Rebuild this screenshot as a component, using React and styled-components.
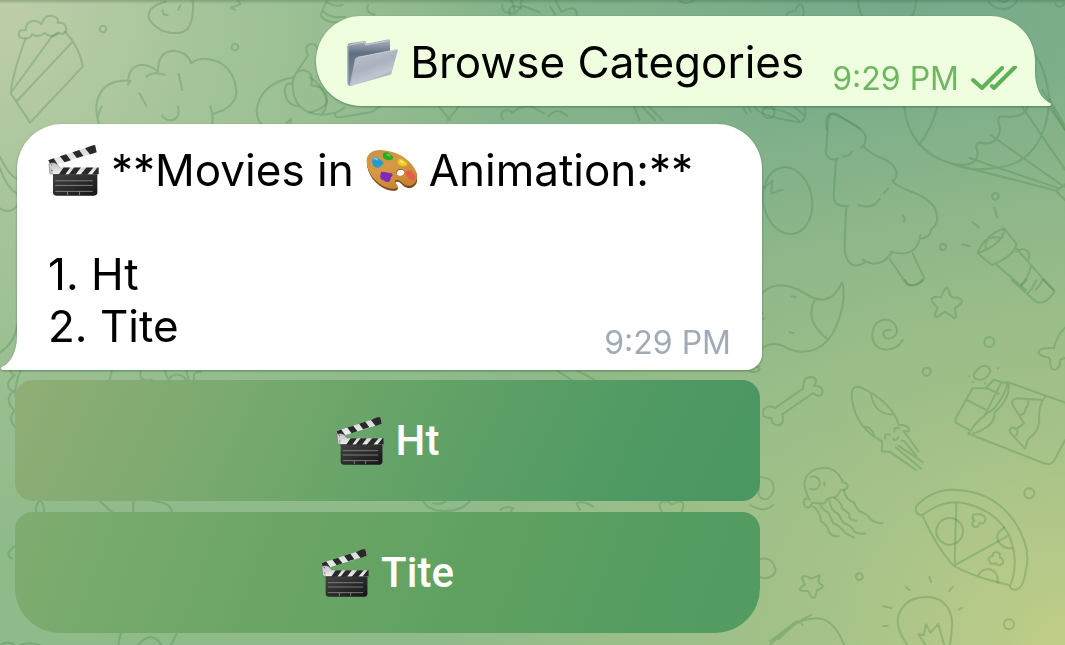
import React from 'react';
import styled, { createGlobalStyle, css } from 'styled-components';

const GlobalStyle = createGlobalStyle`
  *, *::before, *::after { box-sizing: border-box; }
  html, body { margin: 0; }
  body { background: #8fba8a; font-family: Inter, "Liberation Sans", sans-serif; }
`;

const Chat = styled.main`
  position: relative;
  min-height: 100vh;
  overflow: hidden;
  display: flex;
  flex-direction: column;
  gap: 18px;
  padding: 16px 30px 12px 17px;
  background:
    linear-gradient(rgba(40, 90, 60, 0.3), rgba(40, 90, 60, 0) 4px),
    radial-gradient(ellipse 48% 85% at 0% 0%, #bfcea8 0%, rgba(175, 201, 160, 0.6) 45%, rgba(150, 190, 145, 0) 100%),
    radial-gradient(ellipse 60% 90% at 100% 100%, #c0cd88 0%, rgba(174, 197, 136, 0.7) 38%, rgba(150, 188, 138, 0) 100%),
    radial-gradient(ellipse 66% 78% at 84% 0%, #73a98a 0%, rgba(125, 173, 138, 0.82) 35%, rgba(143, 186, 138, 0) 100%),
    #8fba8a;
`;

const Wallpaper = styled.svg`
  position: absolute;
  inset: 0;
  width: 100%;
  height: 100%;
  fill: none;
  stroke: #3c8246;
  stroke-opacity: 0.28;
  stroke-width: 6;
  stroke-linecap: round;
  stroke-linejoin: round;
`;

const Bubble = styled.article`
  position: relative;
  padding: 20px 31px 18px;
  font-size: 44px;
  font-weight: 400;
  line-height: 52px;
  color: #000;
  filter: drop-shadow(0 1px 1px rgba(30, 80, 45, 0.5));
  ${({ $out }) =>
    $out
      ? css`
          align-self: flex-end;
          display: flex;
          align-items: flex-end;
          gap: 28px;
          padding-right: 18px;
          border-radius: 45px 45px 0 45px;
          background: #eefedf;
        `
      : css`
          border-radius: 45px 45px 16px 0;
          background: #fff;
        `}
`;

const Tail = styled.svg`
  position: absolute;
  bottom: 0;
  width: 17px;
  height: 34px;
  ${({ $out }) =>
    $out
      ? css`
          left: 100%;
          fill: #eefedf;
        `
      : css`
          right: 100%;
          fill: #fff;
          transform: scaleX(-1);
        `}
`;

const Line = styled.p`
  margin: 0;
  min-height: 52px;
  display: flex;
  align-items: center;
  gap: 12px;
  white-space: pre;
`;

const Emoji = styled.svg`
  flex: none;
  width: ${({ $size }) => $size}px;
  height: ${({ $size }) => $size}px;
`;

const Meta = styled.div`
  display: flex;
  align-items: center;
  gap: 12px;
  height: 40px;
  margin-bottom: -11px;
  font-size: 32px;
  line-height: 40px;
  color: ${({ $out }) => ($out ? '#6fb562' : '#a0abb6')};
`;

const LastRow = styled.div`
  display: flex;
  justify-content: space-between;
  align-items: flex-end;
`;

const Checks = styled.svg`
  width: 46px;
  height: 26px;
  fill: none;
  stroke: #5cb255;
  stroke-width: 4;
  stroke-linecap: round;
  stroke-linejoin: round;
`;

const Incoming = styled.section`
  width: 100%;
  max-width: 745px;
  position: relative;
`;

const Keyboard = styled.div`
  display: grid;
  gap: 11px;
  margin: 10px 2px 0 -2px;
`;

const KeyButton = styled.button`
  display: flex;
  align-items: center;
  justify-content: center;
  gap: 12px;
  height: 121px;
  border: 0;
  padding: 0;
  border-radius: ${({ $last }) => ($last ? '18px 18px 45px 45px' : '18px')};
  background: ${({ $last }) =>
    $last
      ? 'linear-gradient(110deg, #80ac70 0%, #6fa768 28%, #62a262 55%, #559c61 85%, #529b62 100%)'
      : 'linear-gradient(115deg, #90ae76 0%, #7caa70 26%, #62a267 54%, #4d9863 86%, #4b9762 100%)'};
  color: #fff;
  font: 500 42px/50px Roboto, "Liberation Sans", sans-serif;
  cursor: pointer;
`;

function Clapper({ size }) {
  return (
    <Emoji $size={size} viewBox="0 0 154 154" role="img" aria-label="Clapper board">
      <defs>
        <linearGradient id="slate" x1="0" y1="0" x2="1" y2="1">
          <stop offset="0" stopColor="#444" />
          <stop offset="0.5" stopColor="#2b2b2c" />
          <stop offset="1" stopColor="#151516" />
        </linearGradient>
        <linearGradient id="stripe" x1="0" y1="0" x2="0" y2="1">
          <stop offset="0" stopColor="#d4d4d4" />
          <stop offset="1" stopColor="#f0f0f0" />
        </linearGradient>
      </defs>
      <path d="M0 46 142 0l5 22L10 64Z" fill="url(#stripe)" />
      <path d="M1 46l16-6 12 18-19 6Zm35-12 19-6 14 18-19 6Zm38-12 20-7 13 18-20 6Zm38-12 19-8 11-2 5 22-20 7Z" fill="#29292a" />
      <path d="M3 57q18-9 30 8l8 15-8 7H6Z" fill="#cfd0d1" stroke="#77797b" strokeWidth="2" />
      <path d="M15 68h137v20H15Z" fill="url(#stripe)" />
      <path d="M15 88h18l14-20h20L50 92H15Zm48 0 16-20h20L83 90H61Zm36 0 17-20h21l-18 22H97Zm34 0 16-20h4v20Z" fill="#29292a" />
      <path d="M15 88h134v55q0 10-10 10H25q-10 0-10-10Z" fill="url(#slate)" />
      <path d="M22 108h113M22 122h113M22 140h113M59 140v11M95 140v11" stroke="#909294" strokeWidth="2.5" />
      <circle cx="11" cy="60" r="2" fill="#555" />
      <circle cx="12" cy="77" r="2" fill="#555" />
    </Emoji>
  );
}

function Folder() {
  return (
    <Emoji $size={51} viewBox="112 114 153 153" role="img" aria-label="Open folder">
      <defs>
        <linearGradient id="folderBack" x1="0" y1="0" x2="0" y2="1">
          <stop offset="0" stopColor="#b1b9c4" />
          <stop offset="0.3" stopColor="#5f6f80" />
          <stop offset="1" stopColor="#8391a1" />
        </linearGradient>
        <linearGradient id="folderFront" x1="0" y1="0" x2="0.5" y2="1">
          <stop offset="0" stopColor="#bec5cf" />
          <stop offset="0.55" stopColor="#abb2bf" />
          <stop offset="0.8" stopColor="#c1c6d0" />
          <stop offset="1" stopColor="#8e98a7" />
        </linearGradient>
      </defs>
      <path d="M114 139q0-5 5-6l46-7q4 0 5 8l67-13q4 0 4 4v34L128 259q-13 6-13-6Z" fill="url(#folderBack)" />
      <path d="M116 139l48-10 4 9 68-13" fill="none" stroke="#c7ccd5" strokeWidth="3" />
      <path d="M115 140v114l6 5" fill="none" stroke="#9ca6b3" strokeWidth="4" />
      <path d="M146 174l115-23q5 0 3 5l-18 65q-1 4-5 6l-115 33q-7 1-5-5l15-75q2-5 10-6Z" fill="url(#folderFront)" />
      <path d="M144 175l117-23" fill="none" stroke="#d6dae1" strokeWidth="2" />
    </Emoji>
  );
}

function Palette() {
  return (
    <Emoji $size={51} viewBox="1088 77 154 154" role="img" aria-label="Artist palette">
      <defs>
        <linearGradient id="wood" x1="0" y1="0" x2="0.6" y2="1">
          <stop offset="0" stopColor="#c9924a" />
          <stop offset="0.5" stopColor="#d69a45" />
          <stop offset="1" stopColor="#c88332" />
        </linearGradient>
      </defs>
      <path
        d="M1090 125c2-25 29-34 60-30 42 5 79 34 90 66 8 28-8 46-26 43-17-3-22-22-35-19-10 4 7 13 4 22-4 9-21 5-34 1-35-12-61-50-59-83Zm93 27c-8 9-2 18 10 17 13-2 14-14 5-19-5-2-11-2-15 2Z"
        fill="#79471c"
        fillRule="evenodd"
        transform="translate(1 3)"
      />
      <path
        d="M1090 122c2-25 29-34 60-28 42 5 79 34 90 65 8 26-8 44-26 41-17-3-22-20-35-17-10 4 7 13 4 21-4 9-21 5-34 1-35-12-61-50-59-83Zm93 31c-8 9-2 18 10 17 13-2 14-14 5-19-5-2-11-2-15 2Z"
        fill="url(#wood)"
        fillRule="evenodd"
      />
      <path d="M1140 102q10-6 17 0l12 9q3 6-2 10l-13 2-10-4q-9-7-4-17Z" fill="#28ac27" />
      <path d="M1109 116q9-6 15 0l12 9q9 4 3 10l-7 7q-12 9-22-3-7-11-1-23Z" fill="#229dcd" />
      <path d="M1111 119q9-5 12 4" fill="none" stroke="#70d0f1" strokeWidth="5" />
      <path d="M1186 121q9-4 14 2l10 6q5 7-3 11-12 4-21-5-5-8 0-14Z" fill="#edcf20" />
      <path d="M1211 155q10-4 15 4l10 12q4 11-7 12-11-1-16-10-10-10-2-18Z" fill="#eb594c" />
      <path d="M1134 158l15 1q9 3 17 3 5 7-2 12l-4 12q-10 6-18-2-12-2-11-14Z" fill="#812ab5" />
      <path d="M1150 107q8-2 11 5" fill="none" stroke="#78d254" strokeWidth="4" />
      <path d="M1191 125l11 5" fill="none" stroke="#fff486" strokeWidth="4" />
    </Emoji>
  );
}

function Doodles() {
  return (
    <Wallpaper viewBox="0 0 1065 645" preserveAspectRatio="xMinYMin slice" aria-hidden="true">
      {/* cake, strawberry, cloud face and bird */}
      <g transform="scale(0.3333)">
        <path d="M77 115C58 165 38 225 32 279L90 368 249 199Q238 140 196 96M32 279 157 108M51 303 215 128M157 108l18-10" />
        <path d="M96 103Q91 117 73 115 56 115 56 101 58 86 77 91 77 63 104 62 116 63 125 72 134 44 157 48 178 52 173 69 197 65 199 86 198 99 184 103 178 96 168 105 150 114 134 99 117 114 96 103Z" />
        <path d="M498 5Q436 20 448 58 480 103 535 99 566 97 575 60 583 20 577 0M488 31q-1 15 15 14M541 16l-6 14M713 0l9 12-28 11 11 6" />
        <circle cx="309" cy="87" r="10" /><circle cx="705" cy="141" r="10" />
        <path d="M297 371Q280 317 299 284 320 238 392 242L384 253M384 243Q388 197 426 194 455 196 474 216 473 154 521 152 563 155 574 190 602 166 654 185 705 211 709 276 708 322 639 342M439 230q22-18 56-5M419 281l20 36M536 222l11 48M486 347q16 21 40 10 15-13 8-38M631 320q9 20 6 50M305 320q-17 29-8 50" />
        <path d="M982 0q-17 34-20 48 24 25 60 17M969 34q26 24 68 16M984 9q21 12 44 6M925 165l-38 56M925 165q-14-20 1-31 24-9 27 18M882 232q-102 18-112 99 1 31 14 40M890 219q14-15 36-2 15 13 7 39 62 6 43 72l-12 16Q878 340 878 252q1-22 12-33M877 252q-20-6-23 19 3 43 41 48M964 344q53-2 70-22M858 370l16-14-4 15" />
        <path d="M1104 15q-10 22 20 29M1508 15q-5 12 7 21l28 5q0-35-12-41M1544 40l25-22 50 19" />
      </g>
      {/* strip above and below the first message */}
      <g transform="translate(680 0) scale(0.3333)">
        <path d="M535 0q0 29 11 48M708 0q0 26-12 48M319 48q0-13 27-16 17-36 24-5 4 9-2 20M0 4q23 12 45-4M925 5q16 23 49 22 27-4 37-25M955 0q16 13 31 0M1125 10q12 21 30 0" />
        <path d="M1065 165q23 29 35 83l11 62M1088 270l67 120M1110 300l45 78" />
        <path d="M440 388q-6-48 17-47 33 12 82 43M191 325q3 9 9 15M205 321l8 15" />
      </g>
      <g transform="translate(310 0) scale(0.3333)">
        <path d="M0 232q36 22 51 71-3 22-51 34M77 342q-7 10 15 10l90-15 28-17M387 320l33 40M446 320l-32 40M578 358q-11-24 11-27 13-1 18 9 20-25 60-20l35 20M715 349q26-30 57-1M972 320l17 40M997 320l38 40M1017 320l40 40M600 45q-9-37 32-22-1-20 5-23M720 20l16 23M736 0l19 36q46-26 45 9" />
      </g>
      {/* tree, egg, balloon and torch */}
      <g transform="translate(750 90) scale(0.3333)">
        <path d="M265 205q-24 11-35-10-5-6-1-24l6-82q3-25 27-16l70 45q25 19 9 49l-6 5M341 167q5 12 38 31 65 23 60 57-1 12-10 19M258 209l-7 105q-1 39 43 33M426 272q5 11 57 33 85 29 78 89-3 12-17 24-5 27-33 28l-1-10M426 487q-38 54-88 22M347 516q-48 30-62-27-3-15 4-137M510 447q-19 60-88 38M280 199q16 1 25-14M326 346q43 12 63-18M401 310l14-15M459 377q7 9 3 18M419 507l46 68q7 14 24 10 29-4 33-23l-34-72" />
        <ellipse cx="113" cy="332" rx="73" ry="101" transform="rotate(-10 113 332)" />
        <path d="M43 293l24-20-3 37 34-11M15 52q15 28 134 45 24-8 15-45M137 54l28 24M40 54q78 4 110 42" />
        <circle cx="56" cy="67" r="18" />
        <path d="M463 50q13 130 137 170 63 28 150 12 136-21 149-205M562 50q-15 63-55 115M834 50q-13 37-80 29-13 2-7 25 9 24-9 44-17 19-50 9-15 9-7 22 6 20-6 33-20 19-73 8M604 221l318 82M816 50l129 188M862 0l83 118M722 135l220 155M658 204l272 92M919 303l26-20M919 303l26 27" />
        <circle cx="736" cy="319" r="10" /><circle cx="579" cy="471" r="9" />
        <path d="M733 353l9 31M668 397q11 5 18 15M637 463l22 6M683 490q20-53 79-75l37 45q-2 35-73 65ZM683 490q80-30 79-75M707 475q-4-34 34-33 17 0 17 1M740 525l88 75M799 475l110 125M799 485q28-20 39 10 0 12-6 16M842 530q-5 33-31 56M878 565q-5 21-22 35" />
      </g>
      {/* fish, stars, squid and chocolate */}
      <g transform="translate(750 280) scale(0.3333)">
        <path d="M37 38q49-45 128 2 75 49 111-33 9 21 2 69Q249 218 153 215 127 215 98 197 62 184 37 205M193 61q-30 64 41 117M125 49l12 3M118 156l14 4M37 97v5M38 116h5" />
        <path d="M0 275q26 5 29-10l-12-8M465 0q19 33 52 0" />
        <path d="M588 25q7-5 12 20 5 9 22 8 23 6 8 20l-16 12 4 24q-4 9-11 1l-21-15-24 16q-12 1-7-9l8-19-15-15q-9-15 8-17l18-1 9-20q3-5 5-5Z" />
        <path d="M422 151q-22-4-22 11 2 17 21 13 20-5 20-26-6-31-38-30-32 3-36 43 0 44 43 47 33-2 48-29" />
        <circle cx="718" cy="186" r="15" /><circle cx="530" cy="275" r="12" />
        <path d="M75 384q-18-12-33 3-12 28 22 27 0 22 20 22 20-3 13-33l92-64q26 20 29-6-2-16-26-16 13-17-2-25-33-6-30 33Z" />
        <path d="M396 483q-78-36-91-130-2-42 29-30 81 38 107 97 5 20 10 14 25 3 27 14-1 10-17 5M363 344q14 64 68 58M343 440q20-1 31 28M396 483v31q16 3 22 0l80 56M437 502l77 64M445 497l73 49M454 482l7 0 39 46M463 456l42 58M405 476q-3-18 14-12M434 455q-4-15 14-11M429 475q5 12 16-2" />
        <path d="M668 325h39l25-25 37 10M668 325l-50 88q-4 12 2 17l36 19M650 360l56 28M713 326l33 15M730 300l-23 26M754 308l-52 102M771 307q3 26-39 79-51 32-74 72M776 310q7 44-43 89 4 39-64 62M769 305l176 63M655 461l225 88q22 10 34-10l31-58M888 347q-25 31-20 73-1 35-33 57l-10 29-45-49q-3-19 15-13 16 10 0 26M878 360l-77-5q-20 5-13 19l34 57-25 17M835 360q2 18-8 25-2 19-17 20" />
        <path d="M671 284q20-34 42-25l9 14q-10 25-28 26-23 1-23-15ZM656 289h1M744 265h1M669 306h1M705 310h1M945 143q-27 29-33 62-44-4-47 12 3 9 27 15 8 2 8 10 0 27 13 27 19-1 18-30l14-5" />
        <path d="M785 0l67 60q11 12 28 6 18-7 32-28 3-4 0-9L880 0M830 0l-20 20M859 0q-10 25-25 39" />
      </g>
      {/* jellyfish, pizza and light bulb */}
      <g transform="translate(750 450) scale(0.3333)">
        <path d="M179 149q-37-65 15-90 56-21 82 31 2 12 8 8 19 10-1 22-9-2-13 2-3 14-18 21-13-1-22 6-4 15-25 11l-19-2q-5 24-23 9-6-30 16-18Z" />
        <path d="M182 82q10-5 19 1 16 11 2 31-10 8-22 2M223 97v9" />
        <path d="M190 170q21 14 23 44 20 11 23 29 8 19 30 15M212 166q8 17 23 22l14 31q21 8 37 30l25 13M238 151q5 32 25 39l18 30q26 8 31 24 15 11 34 6M255 144q21 17 21 30l22 18q-4 18 20 20M281 121q8 31 31 36 3 14 18 28 19 4 35 25 20 12 33 9" />
        <path d="M500 166q56-54 123-46 110 7 171 95 52 78 33 149-8 55-32 55-15 0-15-13l-62-16q-61-17-108-43-49-54-93-151-27-4-17-30ZM517 196q60-48 122-37 94 19 136 92 36 81 5 158M619 158l-5 186M611 348l163-90" />
        <circle cx="599" cy="244" r="40" />
        <path d="M763 233q-36 23-12 49 12 14 35 13M684 377q11-22 36-19 27 9 23 40M670 207q-9-16 14-14 13-1 11 2 16 3 10 20-7 9-17 3-3 18-17 12-10-13 3-18-9-3-4-5ZM730 318q-6-9 7-12 17 2 12 16 15 6 9 18-14 12-19 0-10 3-18 0-13-20 9-22Z" />
        <circle cx="838" cy="130" r="15" /><circle cx="777" cy="523" r="15" /><circle cx="328" cy="380" r="10" />
        <path d="M160 379q6-3 24 7l25-11-4 22 15 12q-8 10-20 11-3 32-15 21l-11-18q-34 1-22-9l13-11q-14-23-5-24ZM60 585q73-76 126-79 60-12 97 79M86 568q45-45 65-56l6 12M151 512l32-17M60 575l80-62" />
        <path d="M472 585q-45-63-20-104 23-39 74-40 64-1 79 62 4 22-5 82M527 585l-22-32 16 3 7-33 13 25 24-26 17 61M538 380l5 16M467 410l11 10M608 411l-10 12M401 469l23 5M399 528h14M636 474l-9 5" />
        <path d="M28 82q51-1 42 43-17 33-38 18-11-12-4-29M0 165q43 25 69 0M30 327q40-8 47 35-10 29-47 20" />
      </g>
      {/* pieces visible between the keyboard rows */}
      <g transform="translate(0 330) scale(0.3333)">
        <path d="M0 67q44-28 51-79M30 120q4 13 14 16-31 22-13 44 14 9 11 2-33 25 2 61-22 20 0 47M62 120q-18 44-16 80M336 120l-7 30M423 120q-10 40 33 29M493 120l12 30q21-32 55-1M559 120l7 30M583 150q-7-28 20-24M108 546q-3-22 11-33 14 5 13 33M300 513l36 33M400 513v33M460 513q56 7 55 33M45 648q-34 24-10 38M362 910l-7 35M414 945q42-47 70 0M530 910l-16 35M0 945q25-14 43 0M60 945q27-10 60 0" />
        <path d="M1270 513q17 33 67 30 50-1 73-30M1300 520q25 5 40-7M1670 121l45 29M1730 121l55 29M1500 540q15-12 40-6l-8 12M1780 530q-30-20-50-10l10 20M1985 545q-20-35 20-30 15 14 25 0 30-5 15 30" />
      </g>
      <g transform="translate(0 120) scale(0.3333)">
        <path d="M0 110q24 53 51 67M0 145q20 58 51 76M0 265q30 20 51-8" />
      </g>
    </Wallpaper>
  );
}

function TailShape({ out }) {
  return (
    <Tail $out={out} viewBox="0 0 17 34" aria-hidden="true">
      <path d="M-1 0H0C0 15 6 27 15 31Q17 32 15 34H-1Z" />
    </Tail>
  );
}

export default function App() {
  return (
    <>
      <GlobalStyle />
      <Chat>
        <Doodles />
        <Bubble $out>
          <Line><Folder /><span>Browse Categories</span></Line>
          <Meta $out>
            <time>9:29 PM</time>
            <Checks viewBox="0 0 46 26" role="img" aria-label="Read">
              <path d="M2 14l9 8L31 2M21 20l2 2L44 1" />
            </Checks>
          </Meta>
          <TailShape out />
        </Bubble>
        <Incoming>
          <Bubble>
            <Line>
              <Clapper size={51} />
              <span>**Movies in</span>
              <Palette />
              <span>Animation:**</span>
            </Line>
            <Line />
            <Line>1. Ht</Line>
            <LastRow>
              <Line>2. Tite</Line>
              <Meta><time>9:29 PM</time></Meta>
            </LastRow>
            <TailShape />
          </Bubble>
          <Keyboard>
            <KeyButton type="button"><Clapper size={48} />Ht</KeyButton>
            <KeyButton type="button" $last><Clapper size={48} />Tite</KeyButton>
          </Keyboard>
        </Incoming>
      </Chat>
    </>
  );
}
